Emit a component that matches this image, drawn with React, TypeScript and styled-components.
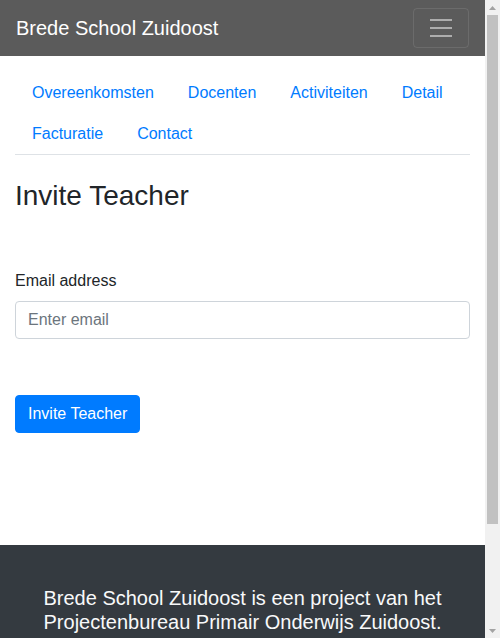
import React from "react";
import styled, { createGlobalStyle } from "styled-components";

const GlobalStyle = createGlobalStyle`
  html, body {
    margin: 0;
    padding: 0;
    height: 100%;
    overflow: hidden;
  }
  body {
    font-family: "Liberation Sans", Arial, sans-serif;
    font-size: 16px;
    line-height: 1.5;
    color: #212529;
    background: #ffffff;
  }
  #root { height: 100%; }
  * { box-sizing: border-box; }
`;

const Shell = styled.div`
  display: flex;
  height: 100vh;
  overflow: hidden;
`;

const Page = styled.div`
  flex: 1;
  min-width: 0;
  overflow: hidden;
`;

const ScrollRail = styled.div`
  width: 15px;
  flex: none;
  display: flex;
  flex-direction: column;
  background: #f1f1f1;
`;

const ScrollArrow = styled.div`
  height: 15px;
  flex: none;
  display: flex;
  align-items: center;
  justify-content: center;
`;

const ScrollTrack = styled.div`
  flex: 1;
  display: flex;
  flex-direction: column;
  padding: 0 2px;
`;

const ScrollThumb = styled.div`
  height: 509px;
  background: #c1c1c1;
`;

const Navbar = styled.nav`
  display: flex;
  align-items: center;
  justify-content: space-between;
  padding: 8px 16px;
  background: #5b5b5b;
`;

const Brand = styled.a`
  font-size: 20px;
  line-height: 30px;
  padding: 5px 0;
  color: #ffffff;
  text-decoration: none;
`;

const Toggler = styled.button`
  display: flex;
  align-items: center;
  justify-content: center;
  width: 56px;
  height: 40px;
  padding: 4px 12px;
  background: transparent;
  border: 1px solid rgba(255, 255, 255, 0.1);
  border-radius: 4px;
`;

const Container = styled.main`
  padding: 0 15px;
  margin-bottom: 112px;
`;

const Tabs = styled.ul`
  display: flex;
  flex-wrap: wrap;
  list-style: none;
  margin: 16px 0 0;
  padding: 0;
  border-bottom: 1px solid #dee2e6;
`;

const TabItem = styled.li`
  margin-bottom: -1px;
`;

const TabLink = styled.a`
  display: block;
  padding: 8px 16px;
  border: 1px solid transparent;
  color: #007bff;
  text-decoration: none;
  line-height: 24px;
`;

const Title = styled.h3`
  margin: 24px 0 8px;
  font-size: 28px;
  font-weight: 500;
  line-height: 1.2;
  color: #212529;
`;

const Form = styled.form`
  padding-top: 48px;
`;

const Label = styled.label`
  display: block;
  margin-bottom: 8px;
  line-height: 24px;
`;

const Input = styled.input`
  display: block;
  width: 100%;
  height: 38px;
  padding: 6px 12px;
  font-family: inherit;
  font-size: 16px;
  line-height: 24px;
  color: #495057;
  border: 1px solid #ced4da;
  border-radius: 4px;
  &::placeholder { color: #6c757d; }
`;

const PrimaryButton = styled.button`
  display: inline-block;
  margin-top: 56px;
  height: 38px;
  padding: 6px 12px;
  font-family: inherit;
  font-size: 16px;
  line-height: 24px;
  color: #ffffff;
  background: #007bff;
  border: 1px solid #007bff;
  border-radius: 4px;
`;

const Footer = styled.footer`
  background: #343a40;
  padding: 41px 15px 128px;
  text-align: center;
`;

const FooterText = styled.p`
  margin: 0;
  font-size: 20px;
  line-height: 24px;
  color: #f8f9fa;
`;

const tabs = ["Overeenkomsten", "Docenten", "Activiteiten", "Detail", "Facturatie", "Contact"];

const Arrow = ({ up }: { up?: boolean }) => (
  <svg width="7" height="4" viewBox="0 0 7 4">
    <path d={up ? "M0 4L3.5 0L7 4Z" : "M0 0L3.5 4L7 0Z"} fill="#a3a3a3" />
  </svg>
);

export default function App() {
  return (
    <>
      <GlobalStyle />
      <Shell>
        <Page>
          <Navbar>
            <Brand href="#">Brede School Zuidoost</Brand>
            <Toggler type="button" aria-label="Toggle navigation">
              <svg width="30" height="30" viewBox="0 0 30 30">
                <path
                  d="M4 7h22M4 15h22M4 23h22"
                  stroke="rgba(255,255,255,0.5)"
                  strokeWidth="2"
                  strokeMiterlimit="10"
                />
              </svg>
            </Toggler>
          </Navbar>
          <Container>
            <Tabs>
              {tabs.map((t) => (
                <TabItem key={t}>
                  <TabLink href="#">{t}</TabLink>
                </TabItem>
              ))}
            </Tabs>
            <Title>Invite Teacher</Title>
            <Form onSubmit={(e) => e.preventDefault()}>
              <Label htmlFor="email">Email address</Label>
              <Input id="email" type="email" placeholder="Enter email" />
              <PrimaryButton type="submit">Invite Teacher</PrimaryButton>
            </Form>
          </Container>
          <Footer>
            <FooterText>
              Brede School Zuidoost is een project van het Projectenbureau Primair Onderwijs Zuidoost.
            </FooterText>
          </Footer>
        </Page>
        <ScrollRail aria-hidden="true">
          <ScrollArrow>
            <Arrow up />
          </ScrollArrow>
          <ScrollTrack>
            <ScrollThumb />
          </ScrollTrack>
          <ScrollArrow>
            <Arrow />
          </ScrollArrow>
        </ScrollRail>
      </Shell>
    </>
  );
}
